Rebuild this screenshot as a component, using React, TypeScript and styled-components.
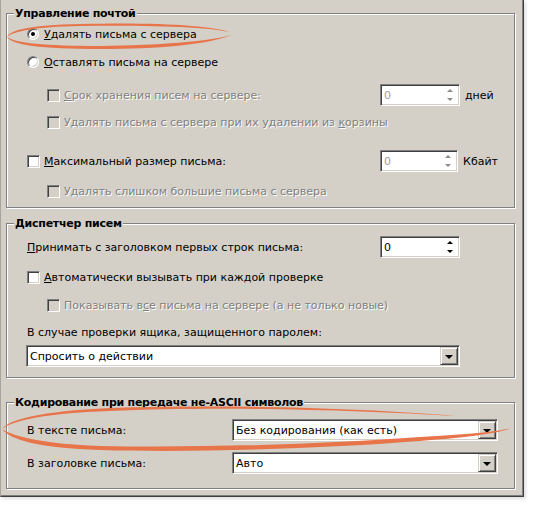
import * as React from 'react'
import styled, { createGlobalStyle } from 'styled-components'

const GlobalStyle = createGlobalStyle`
  html, body {
    margin: 0;
    padding: 0;
    background: #fff;
  }
  body {
    font-family: 'DejaVu Sans', Tahoma, sans-serif;
    font-size: 11px;
    color: #000;
  }
`

const Page = styled.div`
  position: relative;
  width: 535px;
  height: 508px;
`

const Dialog = styled.div`
  box-sizing: border-box;
  width: 524px;
  height: 497px;
  display: flex;
  flex-direction: column;
  padding: 13px 8px 0 5px;
  background: #d4d0c8;
  border-left: 1px solid #a8a49c;
  border-right: 1px solid #404040;
  border-bottom: 1px solid #404040;
  box-shadow: inset -1px -1px 0 #808080, 2px 2px 3px rgba(0, 0, 0, 0.12);
`

const Group = styled.div<{ $mt?: number; $pb: number }>`
  box-sizing: border-box;
  display: flex;
  flex-direction: column;
  margin-top: ${p => p.$mt ?? 0}px;
  padding: 0 16px ${p => p.$pb}px 20px;
  border: 1px solid #808080;
  box-shadow: inset 1px 1px 0 #fff, 1px 1px 0 #fff;
`

const GroupTitle = styled.div`
  align-self: flex-start;
  height: 13px;
  margin: -7px 0 0 -13px;
  padding: 0 1px;
  line-height: 13px;
  font-weight: bold;
  letter-spacing: -0.25px;
  background: #d4d0c8;
  white-space: nowrap;
`

const Row = styled.div<{ $mt: number; $indent?: boolean }>`
  display: flex;
  align-items: center;
  height: 22px;
  margin-top: ${p => p.$mt}px;
  padding-left: ${p => (p.$indent ? 20 : 0)}px;
`

const Lead = styled.div<{ $w: number }>`
  display: flex;
  align-items: center;
  flex: 0 0 ${p => p.$w}px;
`

const Label = styled.span<{ $disabled?: boolean }>`
  margin-left: 4px;
  white-space: nowrap;
  color: ${p => (p.$disabled ? '#808080' : '#000')};
  text-shadow: ${p => (p.$disabled ? '1px 1px 0 #fff' : 'none')};
  &:first-child {
    margin-left: 0;
  }
`

const CheckBox = styled.span<{ $disabled?: boolean }>`
  box-sizing: border-box;
  flex: none;
  width: 13px;
  height: 13px;
  border: 1px solid;
  border-color: #808080 #fff #fff #808080;
  box-shadow: inset 1px 1px 0 #404040, inset -1px -1px 0 #d4d0c8;
  background: ${p => (p.$disabled ? '#d4d0c8' : '#fff')};
`

const Radio = styled.span<{ $checked?: boolean }>`
  box-sizing: border-box;
  flex: none;
  display: flex;
  align-items: center;
  justify-content: center;
  width: 12px;
  height: 12px;
  margin-right: 1px;
  border-radius: 50%;
  border: 1px solid;
  border-color: #808080 #fff #fff #808080;
  box-shadow: inset 1px 1px 0 #404040, inset -1px -1px 0 #d4d0c8;
  background: #fff;

  &::after {
    content: '';
    width: 4px;
    height: 4px;
    border-radius: 50%;
    background: ${p => (p.$checked ? '#000' : 'transparent')};
  }
`

const Sunken = styled.div`
  box-sizing: border-box;
  height: 22px;
  display: flex;
  align-items: center;
  background: #fff;
  border: 1px solid;
  border-color: #808080 #fff #fff #808080;
  box-shadow: inset 1px 1px 0 #404040, inset -1px -1px 0 #d4d0c8;
`

const Spin = styled(Sunken)<{ $disabled?: boolean }>`
  width: 80px;
  justify-content: space-between;
  padding: 0 6px 0 3px;
  color: ${p => (p.$disabled ? '#a0a0a0' : '#000')};
`

const SpinArrows = styled.div`
  display: flex;
  flex-direction: column;
  justify-content: space-between;
  height: 12px;
`

const Arrow = styled.span<{ $down?: boolean; $disabled?: boolean }>`
  width: 0;
  height: 0;
  border-left: 3px solid transparent;
  border-right: 3px solid transparent;
  ${p => (p.$down ? 'border-top' : 'border-bottom')}: 3px solid ${p => (p.$disabled ? '#8c8c8c' : '#000')};
`

const Unit = styled.span`
  margin-left: 5px;
  white-space: nowrap;
`

const Select = styled(Sunken)<{ $w: number; $ml?: number }>`
  width: ${p => p.$w}px;
  margin-left: ${p => p.$ml ?? 0}px;
  padding: 0 0 0 3px;
`

const SelectText = styled.span`
  flex: 1;
  white-space: nowrap;
`

const DropButton = styled.span`
  box-sizing: border-box;
  flex: none;
  display: flex;
  align-items: center;
  justify-content: center;
  width: 18px;
  height: 18px;
  margin-right: 1px;
  background: #d4d0c8;
  border: 1px solid;
  border-color: #d4d0c8 #404040 #404040 #d4d0c8;
  box-shadow: inset 1px 1px 0 #fff, inset -1px -1px 0 #808080;

  &::after {
    content: '';
    width: 0;
    height: 0;
    margin-top: 1px;
    border-left: 4px solid transparent;
    border-right: 4px solid transparent;
    border-top: 4px solid #000;
  }
`

const Marks = styled.svg`
  position: absolute;
  left: 0;
  top: 0;
  pointer-events: none;
`

const Check = ({ disabled, children }: { disabled?: boolean; children: React.ReactNode }) => (
  <>
    <CheckBox $disabled={disabled} />
    <Label $disabled={disabled}>{children}</Label>
  </>
)

const SpinBox = ({ value, disabled }: { value: string; disabled?: boolean }) => (
  <Spin $disabled={disabled}>
    <span>{value}</span>
    <SpinArrows>
      <Arrow $disabled={disabled} />
      <Arrow $down $disabled={disabled} />
    </SpinArrows>
  </Spin>
)

const Combo = ({ w, ml, text }: { w: number; ml?: number; text: string }) => (
  <Select $w={w} $ml={ml}>
    <SelectText>{text}</SelectText>
    <DropButton />
  </Select>
)

const orange = '#e8744a'

const App = () => (
  <Page>
    <GlobalStyle />
    <Dialog>
      <Group $pb={5}>
        <GroupTitle>Управление почтой</GroupTitle>
        <Row $mt={3}>
          <Radio $checked />
          <Label><u>У</u>далять письма с сервера</Label>
        </Row>
        <Row $mt={6}>
          <Radio />
          <Label><u>О</u>ставлять письма на сервере</Label>
        </Row>
        <Row $mt={11} $indent>
          <Lead $w={333}>
            <Check disabled><u>С</u>рок хранения писем на сервере:</Check>
          </Lead>
          <SpinBox value="0" disabled />
          <Unit>дней</Unit>
        </Row>
        <Row $mt={5} $indent>
          <Check disabled>Удалять письма с сервера при их удалении из <u>к</u>орзины</Check>
        </Row>
        <Row $mt={17}>
          <Lead $w={353}>
            <Check><u>М</u>аксимальный размер письма:</Check>
          </Lead>
          <SpinBox value="0" disabled />
          <Unit>Кбайт</Unit>
        </Row>
        <Row $mt={8} $indent>
          <Check disabled>Удалять слишком большие письма с сервера</Check>
        </Row>
      </Group>

      <Group $mt={15} $pb={10}>
        <GroupTitle>Диспетчер писем</GroupTitle>
        <Row $mt={6}>
          <Lead $w={353}>
            <Label><u>П</u>ринимать с заголовком первых строк письма:</Label>
          </Lead>
          <SpinBox value="0" />
        </Row>
        <Row $mt={8}>
          <Check><u>А</u>втоматически вызывать при каждой проверке</Check>
        </Row>
        <Row $mt={6} $indent>
          <Check disabled>Показывать в<u>с</u>е письма на сервере (а не только новые)</Check>
        </Row>
        <Row $mt={5}>
          <Label>В случае проверки ящика, защищенного паролем:</Label>
        </Row>
        <Row $mt={2}>
          <Combo w={434} ml={-1} text="Спросить о действии" />
        </Row>
      </Group>

      <Group $mt={24} $pb={14}>
        <GroupTitle>Кодирование при передаче не-ASCII символов</GroupTitle>
        <Row $mt={10}>
          <Lead $w={205}>
            <Label>В тексте письма:</Label>
          </Lead>
          <Combo w={267} text="Без кодирования (как есть)" />
        </Row>
        <Row $mt={11}>
          <Lead $w={205}>
            <Label>В заголовке письма:</Label>
          </Lead>
          <Combo w={267} text="Авто" />
        </Row>
      </Group>
    </Dialog>

    <Marks width={535} height={508} viewBox="0 0 535 508">
      <path
        fill={orange}
        d="M7 37 C12 45 40 49 100 49 C160 49 205 45 232 35 C205 42 160 45 100 46 C45 46 15 43 7 37 Z"
      />
      <path
        fill={orange}
        d="M7 37 C10 30 30 25 80 24 C150 22 215 25 232 33 C215 27 150 25 80 26 C35 27 14 31 7 37 Z"
      />
      <path
        fill={orange}
        d="M2 429 C10 440 40 448 100 450 C200 453 330 448 420 441 C470 437 500 433 511 428 C498 432 468 434 420 437 C330 444 200 448 100 446 C45 444 14 437 2 429 Z"
      />
      <path
        fill={orange}
        d="M2 429 C8 420 40 411 110 408 C220 404 360 408 456 416 C360 410 220 406 110 411 C45 413 12 421 2 429 Z"
      />
    </Marks>
  </Page>
)

export default App
